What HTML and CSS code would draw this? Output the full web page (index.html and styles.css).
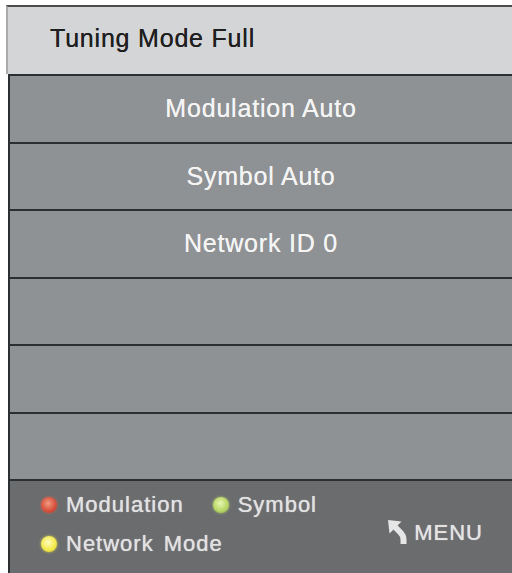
FILE: index.html
```html
<!DOCTYPE html>
<html>
<head>
<meta charset="utf-8">
<link rel="stylesheet" href="styles.css">
</head>
<body>
<div class="screen">
  <div class="title">Tuning Mode Full</div>
  <div class="row">Modulation Auto</div>
  <div class="row">Symbol Auto</div>
  <div class="row">Network ID 0</div>
  <div class="row"></div>
  <div class="row"></div>
  <div class="row"></div>
  <div class="footer">
    <div class="legend">
      <div class="legend-line">
        <span class="item"><span class="dot dot-red"></span>Modulation</span>
        <span class="item"><span class="dot dot-green"></span>Symbol</span>
      </div>
      <div class="legend-line">
        <span class="item item-wide"><span class="dot dot-yellow"></span>Network Mode</span>
      </div>
    </div>
    <div class="menu">
      <svg class="menu-icon" width="21" height="24" viewBox="0 0 21 24">
        <polygon points="0,0 13.5,1.5 1.5,13.5" fill="#e6e6e6"/>
        <path d="M5 5 L12 12 Q15.5 15.5 15.5 19.5 L15.5 24" fill="none" stroke="#e6e6e6" stroke-width="6"/>
      </svg>
      <span>MENU</span>
    </div>
  </div>
</div>
</body>
</html>
```

FILE: styles.css
```css
html, body {
  margin: 0;
  padding: 0;
  background: #ffffff;
  overflow: hidden;
}

body {
  width: 512px;
  height: 573px;
  font-family: "Liberation Sans", Arial, sans-serif;
}

.screen {
  margin: 5px 0 0 6px;
  display: flex;
  flex-direction: column;
}

.title {
  height: 62px;
  padding: 0 0 5px 42px;
  background: #d3d5d7;
  border-top: 2px solid #4a4c4e;
  border-left: 2px solid #a9abad;
  display: flex;
  align-items: center;
  font-size: 25px;
  letter-spacing: 0.8px;
  color: #1f1f1f;
  text-shadow: 0 0 0.6px #1f1f1f;
}

.row {
  margin-left: 2px;
  height: 65.5px;
  background: #8f9294;
  border-top: 2px solid #2b2f31;
  border-left: 2px solid #2b2f31;
  display: flex;
  align-items: center;
  justify-content: center;
  font-size: 25px;
  letter-spacing: 0.8px;
  color: #f4f4f4;
  text-shadow: 0 0 0.6px #f4f4f4;
}

.footer {
  margin-left: 2px;
  height: 100px;
  background: #6a6c6e;
  border-top: 2px solid #2b2f31;
  border-left: 2px solid #2b2f31;
  padding: 4px 29px 0 31px;
  display: flex;
  align-items: flex-start;
  font-size: 22px;
  letter-spacing: 1px;
  color: #e2e2e2;
  text-shadow: 0 0 0.8px #e2e2e2;
}

.legend {
  display: flex;
  flex-direction: column;
}

.legend-line {
  display: flex;
  height: 39px;
  line-height: 39px;
  gap: 29px;
}

.item {
  display: flex;
  align-items: center;
  gap: 9px;
}

.item-wide {
  word-spacing: 3px;
}

.dot {
  width: 16px;
  height: 16px;
  border-radius: 50%;
  flex: none;
}

.dot-red {
  background: radial-gradient(circle at 45% 40%, #f39a82 0%, #d8523e 55%, #b03a2c 100%);
  box-shadow: 0 0 3px rgba(230, 110, 90, 0.8);
}

.dot-green {
  background: radial-gradient(circle at 45% 40%, #e8f6b0 0%, #b8d768 55%, #93b448 100%);
  box-shadow: 0 0 3px rgba(190, 220, 110, 0.8);
}

.dot-yellow {
  background: radial-gradient(circle at 45% 40%, #fffcc0 0%, #f3ea4c 55%, #d6c92c 100%);
  box-shadow: 0 0 3px rgba(240, 230, 80, 0.8);
}

.menu {
  margin-left: auto;
  margin-top: 28px;
  height: 39px;
  display: flex;
  align-items: center;
  gap: 5px;
  color: #e4e4e4;
}

.menu-icon {
  display: block;
  margin-top: -2px;
}
```
